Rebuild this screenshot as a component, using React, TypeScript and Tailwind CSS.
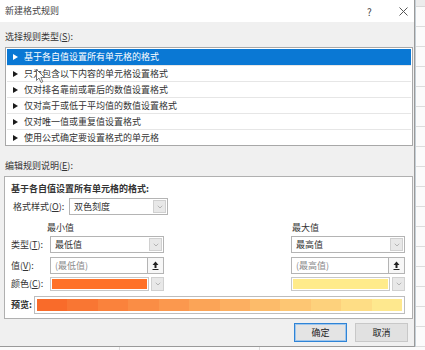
import { ChevronDown } from "lucide-react";

const items = [
  "基于各自值设置所有单元格的格式",
  "只为包含以下内容的单元格设置格式",
  "仅对排名靠前或靠后的数值设置格式",
  "仅对高于或低于平均值的数值设置格式",
  "仅对唯一值或重复值设置格式",
  "使用公式确定要设置格式的单元格",
];

function Tri({ white }: { white?: boolean }) {
  return (
    <svg width="5" height="6" viewBox="0 0 5 6" className="shrink-0">
      <path d="M0 0 L5 3 L0 6 Z" fill={white ? "#ffffff" : "#1a1a1a"} />
    </svg>
  );
}

function Select({ text, className }: { text: string; className: string }) {
  return (
    <div className={`flex h-[17px] border border-[#b4b4b4] bg-white ${className}`}>
      <span className="flex-1 pl-[4px] leading-[15px]">{text}</span>
      <span className="m-[1px] flex w-[13px] items-center justify-center border border-[#d0d0d0] bg-[#e8e8e8]">
        <ChevronDown size={8} strokeWidth={1.5} color="#808080" />
      </span>
    </div>
  );
}

function ValueInput({ text }: { text: string }) {
  return (
    <div className="flex h-[17px] w-[114px]">
      <div className="flex-1 border border-[#b4b4b4] bg-white pl-[4px] leading-[15px] text-[#8a8a8a]">{text}</div>
      <div className="flex w-[16px] items-center justify-center border border-l-0 border-[#b4b4b4] bg-[#f7f7f7]">
        <svg width="7" height="9" viewBox="0 0 7 9">
          <path d="M3.5 0.5 L6.5 4 L4.5 4 L4.5 7 L2.5 7 L2.5 4 L0.5 4 Z" fill="#222" />
          <rect x="0.5" y="8" width="6" height="1" fill="#222" />
        </svg>
      </div>
    </div>
  );
}

function ColorPick({ color }: { color: string }) {
  return (
    <div className="flex h-[14px] w-[114px] gap-[2px]">
      <div className="flex-1 border border-[#c8c8c8] bg-white p-[1px]">
        <div className={`h-full ${color}`} />
      </div>
      <span className="flex w-[13px] items-center justify-center border border-[#d0d0d0] bg-[#e8e8e8]">
        <ChevronDown size={8} strokeWidth={1.5} color="#808080" />
      </span>
    </div>
  );
}

function Preview() {
  const a = [0xf9, 0x6b, 0x2a];
  const b = [0xfe, 0xe8, 0x8e];
  const n = 12;
  const bands = Array.from({ length: n }, (_, i) => {
    const t = i / (n - 1);
    const c = a.map((v, k) => Math.round(v + (b[k] - v) * t));
    return `rgb(${c[0]},${c[1]},${c[2]})`;
  });
  return (
    <div className="flex h-[18px] flex-1 border border-[#bdbdbd] bg-white p-[2px]">
      {bands.map((bg, i) => (
        <div key={i} className="h-full flex-1" style={{ background: bg }} />
      ))}
    </div>
  );
}

export default function App() {
  return (
    <div className="flex h-[350px] w-[425px] flex-col overflow-hidden bg-[#f4f4f4] font-['Noto_Sans_CJK_SC','Noto_Sans',sans-serif] text-[9px] text-[#333]">
      <div className="flex h-[347px]">
        <div className="flex w-[415px] flex-col border-r border-b border-[#9a9a9a] bg-[#f0f0f0]">
          {/* title bar */}
          <div className="flex h-[22px] items-center bg-white pl-[5px] pr-[8px]">
            <span className="flex-1 text-[#444]">新建格式规则</span>
            <span className="w-[32px] text-[10px] text-[#444]">?</span>
            <svg width="9" height="9" viewBox="0 0 9 9" className="-mr-[2px]">
              <path d="M0.5 0.5 L8.5 8.5 M8.5 0.5 L0.5 8.5" stroke="#555" strokeWidth="1" />
            </svg>
          </div>

          <div className="mt-[9px] pl-[5px] leading-[12px]">
            选择规则类型(<span className="underline">S</span>):
          </div>

          {/* rule type list */}
          <div className="relative ml-[5px] mt-[4px] w-[408px] border border-[#a8a8a8] bg-white pt-[1px]">
            {items.map((t, i) => (
              <div
                key={t}
                className={
                  i === 0
                    ? "mx-[1px] flex h-[16px] items-center gap-[6px] bg-[#0a78d4] pl-[6px] text-white"
                    : "mx-[1px] flex h-[16px] items-center gap-[6px] border-t border-[#e6e6e6] pl-[6px]"
                }
              >
                <Tri white={i === 0} />
                <span>{t}</span>
              </div>
            ))}
            <svg width="10" height="15" viewBox="0 0 10 15" className="absolute left-[30px] top-[21px]">
              <path d="M0.5 0.5 L0.5 11.5 L3 9 L5 13.5 L6.8 12.7 L4.9 8.5 L8.5 8.5 Z" fill="#fff" stroke="#555" strokeWidth="0.8" />
            </svg>
          </div>

          <div className="mt-[14px] pl-[5px] leading-[12px]">
            编辑规则说明(<span className="underline">E</span>):
          </div>

          {/* rule description panel */}
          <div className="ml-[4px] mt-[4px] flex w-[409px] flex-col border border-[#b0b0b0] bg-white pb-[4px] pl-[6px] pr-[7px] pt-[6px]">
            <div className="font-bold leading-[12px]">基于各自值设置所有单元格的格式:</div>

            <div className="mt-[3px] flex items-center">
              <span className="w-[58px] pl-[2px]">
                格式样式(<span className="underline">O</span>):
              </span>
              <Select text="双色刻度" className="w-[99px]" />
            </div>

            <div className="mt-[7px] flex leading-[12px]">
              <span className="pl-[36px]">最小值</span>
              <span className="ml-auto w-[114px] pl-[1px]">最大值</span>
            </div>

            <div className="mt-[2px] flex items-center">
              <span className="w-[39px]">
                类型(<span className="underline">T</span>):
              </span>
              <Select text="最低值" className="w-[114px]" />
              <Select text="最高值" className="ml-auto w-[114px]" />
            </div>

            <div className="mt-[4px] flex items-center">
              <span className="w-[39px]">
                值(<span className="underline">V</span>):
              </span>
              <ValueInput text="(最低值)" />
              <div className="ml-auto">
                <ValueInput text="(最高值)" />
              </div>
            </div>

            <div className="mt-[3px] flex items-center">
              <span className="w-[39px]">
                颜色(<span className="underline">C</span>):
              </span>
              <ColorPick color="bg-[#ff7128]" />
              <div className="ml-auto">
                <ColorPick color="bg-[#ffeb8a]" />
              </div>
            </div>

            <div className="mt-[5px] flex items-center">
              <span className="w-[23px] font-bold">预览:</span>
              <Preview />
            </div>
          </div>

          {/* buttons */}
          <div className="mt-[4px] flex justify-end gap-[8px] pr-[6px]">
            <button className="h-[19px] w-[53px] border border-[#2f84d6] bg-[#e4e4e4] text-[9px] text-[#222] outline outline-1 -outline-offset-2 outline-[#9fc6ec]">
              确定
            </button>
            <button className="h-[19px] w-[53px] border border-[#c8c8c8] bg-[#e1e1e1] text-[9px] text-[#222]">
              取消
            </button>
          </div>
        </div>

        {/* sheet behind the dialog */}
        <div className="flex flex-1 flex-col border-l border-[#c5cfd6] bg-[#fbfbfb]">
          <div className="h-[22px] border-b border-[#d8d8d8] bg-[#ececec]" />
          {Array.from({ length: 17 }, (_, i) => (
            <div key={i} className="h-[20px] shrink-0 border-b border-[#dcdcdc]" />
          ))}
        </div>
      </div>
      <div className="flex flex-1 bg-[#fbfbfb]">
        <div className="w-[120px] border-r border-[#dcdcdc]" />
        <div className="w-[140px] border-r border-[#dcdcdc]" />
      </div>
    </div>
  );
}
